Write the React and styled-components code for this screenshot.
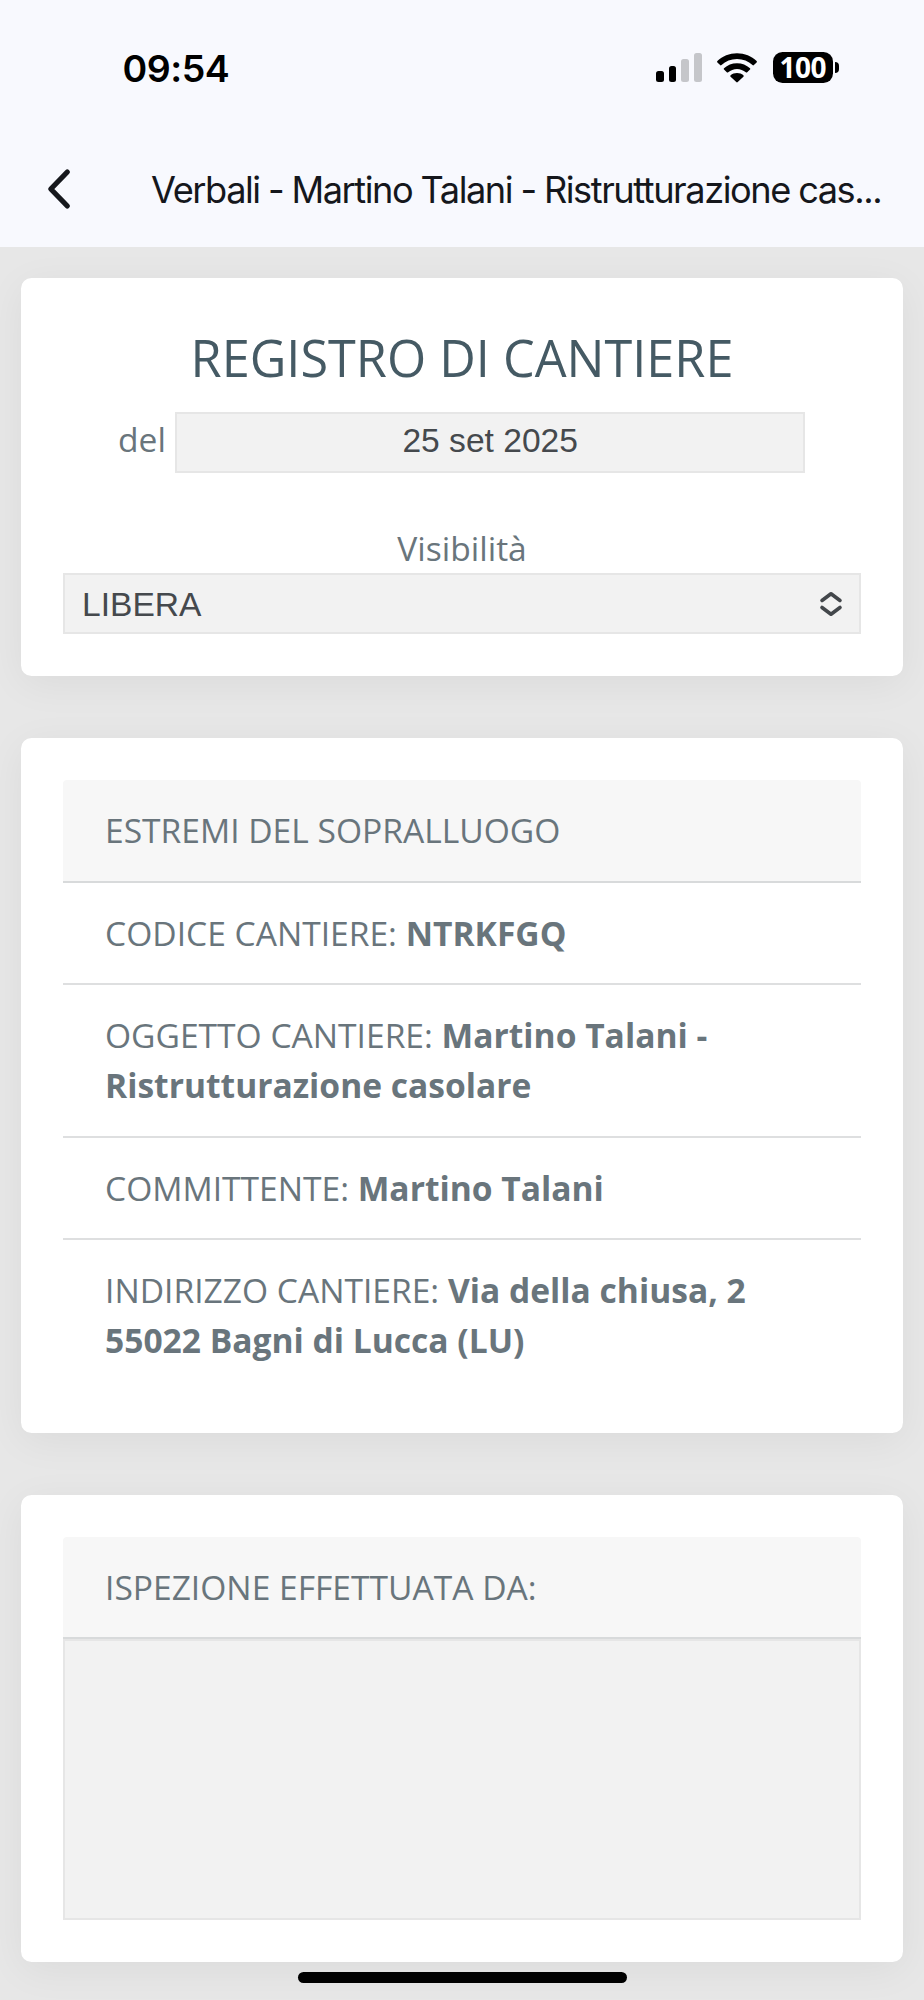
import React, { useState } from 'react';
import styled, { createGlobalStyle } from 'styled-components';

const details = [
  { label: 'CODICE CANTIERE:', lines: ['NTRKFGQ'] },
  { label: 'OGGETTO CANTIERE:', lines: ['Martino Talani -', 'Ristrutturazione casolare'] },
  { label: 'COMMITTENTE:', lines: ['Martino Talani'] },
  { label: 'INDIRIZZO CANTIERE:', lines: ['Via della chiusa, 2', '55022 Bagni di Lucca (LU)'] }
];

const signalBars = [
  { height: 11.5, active: true },
  { height: 16.5, active: true },
  { height: 23, active: false },
  { height: 29, active: false }
];

const WifiIcon = () => (
  <svg width="40" height="30" viewBox="0 0 40 30" fill="#000">
    <path d="M20 0.3C27.6 0.3 34.6 3.2 39.6 8.1Q40.2 8.8 39.6 9.5L36.9 12.1Q36.2 12.7 35.5 12.1C31.4 8.2 26 6 20 6C14 6 8.6 8.2 4.5 12.1Q3.8 12.7 3.1 12.1L0.4 9.5Q-0.2 8.8 0.4 8.1C5.4 3.2 12.4 0.3 20 0.3Z" />
    <path d="M20 10.2C25 10.2 29.6 12.1 33 15.2Q33.7 15.9 33 16.6L30.2 19.3Q29.5 19.9 28.8 19.3C26.4 17.2 23.3 15.9 20 15.9C16.7 15.9 13.6 17.2 11.2 19.3Q10.5 19.9 9.8 19.3L7 16.6Q6.3 15.9 7 15.2C10.4 12.1 15 10.2 20 10.2Z" />
    <path d="M20 20C22.5 20 24.7 20.9 26.4 22.3Q27.1 23 26.4 23.7L20.7 29.1Q20 29.7 19.3 29.1L13.6 23.7Q12.9 23 13.6 22.3C15.3 20.9 17.5 20 20 20Z" />
  </svg>
);

const BackIcon = () => (
  <svg width="26" height="44" viewBox="0 0 26 44" fill="none">
    <path d="M22.3 5L5.8 22L22.3 39" stroke="#16181d" strokeWidth="5.2" strokeLinecap="round" strokeLinejoin="round" />
  </svg>
);

const SelectArrows = () => (
  <svg width="24" height="28" viewBox="0 0 24 28" fill="none" stroke="#43474b" strokeWidth="3.6" strokeLinecap="round" strokeLinejoin="round">
    <path d="M3 10.5L12 3.8L21 10.5" />
    <path d="M3 17.5L12 24.2L21 17.5" />
  </svg>
);

const App = () => {
  const [date, setDate] = useState('25 set 2025');
  const [visibility, setVisibility] = useState('LIBERA');
  const [inspectors, setInspectors] = useState('');

  return (
    <Screen>
      <GlobalStyle />
      <Header>
        <StatusBar>
          <Clock>09:54</Clock>
          <StatusIcons>
            <Signal>
              {signalBars.map((bar) => (
                <SignalBar key={bar.height} $height={bar.height} $active={bar.active} />
              ))}
            </Signal>
            <WifiIcon />
            <BatteryWrap>
              <Battery>100</Battery>
              <BatteryTip />
            </BatteryWrap>
          </StatusIcons>
        </StatusBar>
        <NavBar>
          <BackButton type="button" aria-label="Indietro">
            <BackIcon />
          </BackButton>
          <NavTitle>Verbali - Martino Talani - Ristrutturazione cas...</NavTitle>
        </NavBar>
      </Header>

      <Content>
        <Card>
          <Title>REGISTRO DI CANTIERE</Title>
          <DateRow>
            <DateLabel htmlFor="date">del</DateLabel>
            <DateInput id="date" value={date} onChange={(e) => setDate(e.target.value)} />
          </DateRow>
          <VisibilityField>
            <Label htmlFor="visibility">Visibilità</Label>
            <SelectBox>
              <Select id="visibility" value={visibility} onChange={(e) => setVisibility(e.target.value)}>
                <option value="LIBERA">LIBERA</option>
              </Select>
              <SelectArrows />
            </SelectBox>
          </VisibilityField>
        </Card>

        <Card>
          <SectionHeader>ESTREMI DEL SOPRALLUOGO</SectionHeader>
          {details.map(({ label, lines: [first, ...rest] }) => (
            <DetailRow key={label}>
              <div>
                {label} <strong>{first}</strong>
              </div>
              {rest.map((line) => (
                <div key={line}>
                  <strong>{line}</strong>
                </div>
              ))}
            </DetailRow>
          ))}
        </Card>

        <Card>
          <SectionHeader>ISPEZIONE EFFETTUATA DA:</SectionHeader>
          <NotesArea value={inspectors} onChange={(e) => setInspectors(e.target.value)} />
        </Card>
      </Content>
      <HomeIndicator />
    </Screen>
  );
};

export default App;

const GlobalStyle = createGlobalStyle`
  * {
    box-sizing: border-box;
  }

  body {
    margin: 0;
    background: #e7e7e7;
    font-family: 'Open Sans', sans-serif;
    font-size: 33.6px;
    font-weight: 400;
    color: #69757c;
  }
`;

const Screen = styled.div`
  position: relative;
  display: flex;
  flex-direction: column;
  width: 924px;
  height: 2000px;
  overflow: hidden;
`;

const Header = styled.header`
  flex: none;
  height: 247px;
  background: #f8f9fe;
  font-family: Inter, sans-serif;
`;

const StatusBar = styled.div`
  display: flex;
  justify-content: space-between;
  align-items: center;
  height: 135px;
  padding: 0 85.5px 0 122.5px;
`;

const Clock = styled.span`
  padding-top: 3px;
  font-size: 37.5px;
  font-weight: 600;
  line-height: 46px;
  letter-spacing: -0.5px;
  color: #000;
`;

const StatusIcons = styled.div`
  display: flex;
  align-items: center;
  gap: 15.7px;
`;

const Signal = styled.div`
  display: flex;
  align-items: flex-end;
  gap: 5px;
  height: 29px;
`;

const SignalBar = styled.div`
  width: 7.7px;
  height: ${props => props.$height}px;
  border-radius: 2.5px;
  background: ${props => (props.$active ? '#000' : '#c5c6ca')};
`;

const BatteryWrap = styled.div`
  display: flex;
  align-items: center;
  gap: 2px;
`;

const Battery = styled.div`
  display: flex;
  align-items: center;
  justify-content: center;
  width: 59.5px;
  height: 31px;
  border-radius: 9.5px;
  background: #000;
  color: #fff;
  font-family: 'Open Sans', sans-serif;
  font-size: 28px;
  font-weight: 700;
  line-height: 31px;
  letter-spacing: -0.5px;
`;

const BatteryTip = styled.div`
  width: 4px;
  height: 11px;
  border-radius: 0 5px 5px 0;
  background: #000;
`;

const NavBar = styled.div`
  display: flex;
  align-items: center;
  height: 108px;
  padding-left: 45px;
`;

const BackButton = styled.button`
  display: flex;
  padding: 0;
  border: none;
  background: none;
  cursor: pointer;
`;

const NavTitle = styled.h1`
  margin: 0 0 0 80px;
  padding-top: 1px;
  font-size: 36.2px;
  font-weight: 400;
  line-height: 44px;
  letter-spacing: -1.45px;
  word-spacing: -0.4px;
  white-space: nowrap;
  color: #15171c;
`;

const Content = styled.main`
  flex: 1;
  display: flex;
  flex-direction: column;
  gap: 62.6px;
  padding: 31.4px 21px 0;
  overflow: hidden;
`;

const Card = styled.section`
  flex: none;
  padding: 42px;
  border-radius: 10.5px;
  background: #fff;
  box-shadow: 0 8px 40px rgba(0, 0, 0, 0.055);
`;

const Title = styled.h2`
  margin: 0;
  padding-top: 3px;
  font-size: 50.4px;
  font-weight: 400;
  line-height: 69px;
  text-align: center;
  color: #455a64;
`;

const DateRow = styled.div`
  display: flex;
  align-items: center;
  justify-content: center;
  gap: 9.5px;
  margin-top: 20px;
  padding-right: 1px;
`;

const Label = styled.label`
  line-height: 50.3px;
`;

const DateLabel = styled(Label)`
  padding-bottom: 6.5px;
`;

const DateInput = styled.input`
  width: 629.5px;
  height: 60.3px;
  padding: 0 0 3px;
  border: 2px solid #e6e6e6;
  border-radius: 0;
  background: #f2f2f2;
  font-family: 'Liberation Sans', sans-serif;
  font-size: 33.6px;
  text-align: center;
  color: #45494d;
  outline: none;
`;

const VisibilityField = styled.div`
  display: flex;
  flex-direction: column;
  align-items: center;
  margin-top: 50.4px;
`;

const SelectBox = styled.div`
  display: flex;
  align-items: center;
  width: 100%;
  height: 60.5px;
  padding-right: 16px;
  border: 2px solid #e6e6e6;
  background: #f2f2f2;
`;

const Select = styled.select`
  flex: 1;
  height: 100%;
  padding: 1px 0 0 17px;
  border: none;
  background: transparent;
  appearance: none;
  font-family: 'Liberation Sans', sans-serif;
  font-size: 33.6px;
  color: #45494d;
  outline: none;
`;

const SectionHeader = styled.div`
  padding: 25px 42px;
  border-bottom: 2px solid #d8dadb;
  border-radius: 4px 4px 0 0;
  background: #f7f7f7;
  line-height: 50.3px;
`;

const DetailRow = styled.div`
  padding: 25px 42px;
  border-bottom: 2px solid #dedfe0;
  line-height: 50.3px;

  &:last-child {
    border-bottom: none;
  }

  strong {
    font-weight: 700;
  }
`;

const NotesArea = styled.textarea`
  display: block;
  width: 100%;
  height: 280.6px;
  padding: 16px;
  border: 2px solid #e6e6e6;
  border-radius: 0;
  background: #f2f2f2;
  font-family: 'Liberation Sans', sans-serif;
  font-size: 33.6px;
  color: #45494d;
  resize: none;
  outline: none;
`;

const HomeIndicator = styled.div`
  position: absolute;
  bottom: 17px;
  left: 297.5px;
  width: 329px;
  height: 11px;
  border-radius: 6px;
  background: #000;
`;
